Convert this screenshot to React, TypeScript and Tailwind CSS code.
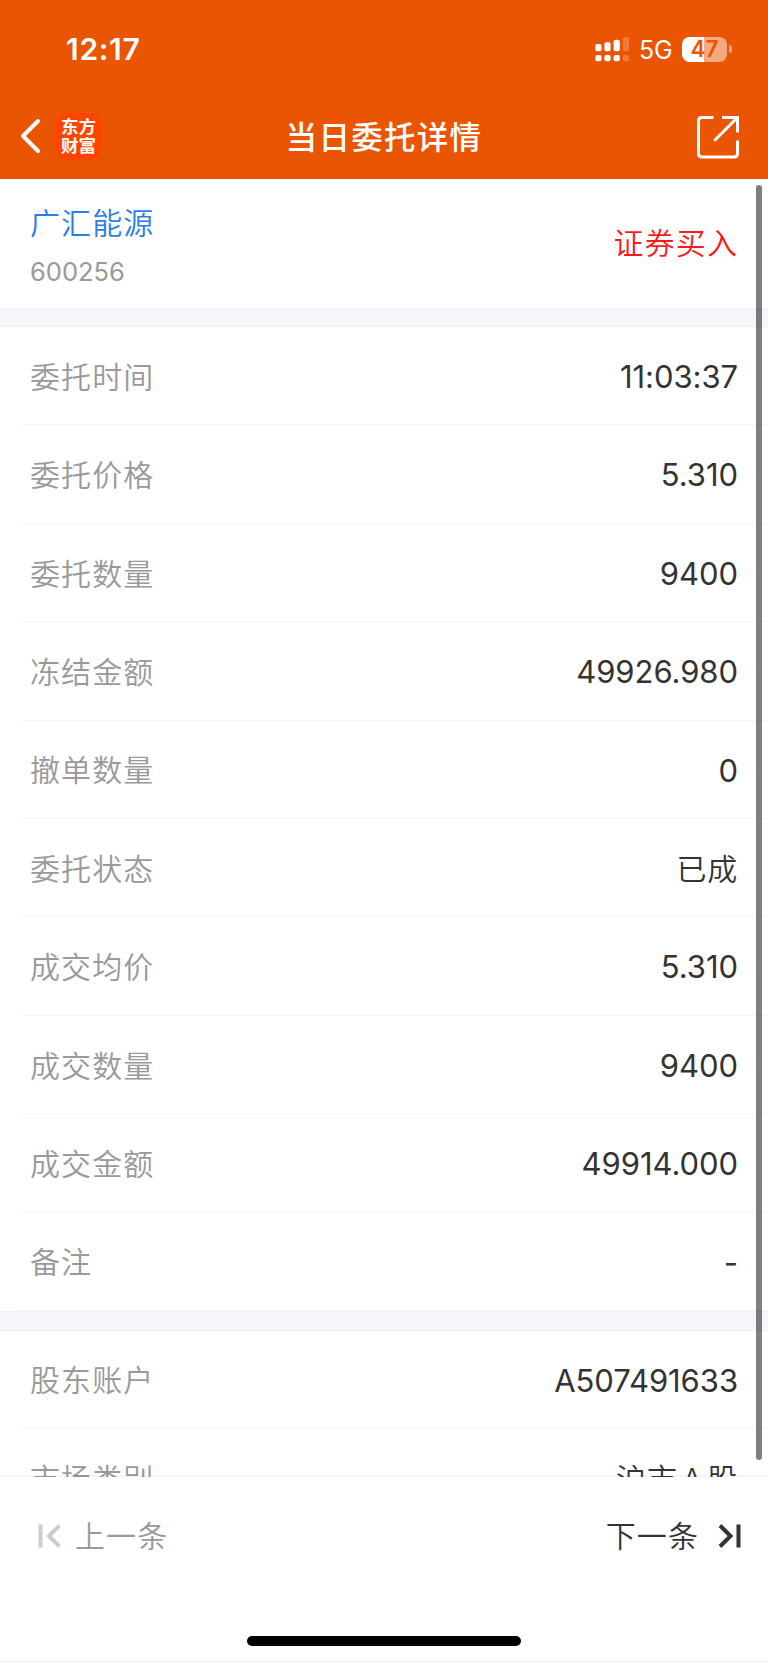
import clsx from 'clsx'

type Item = {
  label: string
  value: string
}

const orderItems: Item[] = [
  { label: '委托时间', value: '11:03:37' },
  { label: '委托价格', value: '5.310' },
  { label: '委托数量', value: '9400' },
  { label: '冻结金额', value: '49926.980' },
  { label: '撤单数量', value: '0' },
  { label: '委托状态', value: '已成' },
  { label: '成交均价', value: '5.310' },
  { label: '成交数量', value: '9400' },
  { label: '成交金额', value: '49914.000' },
  { label: '备注', value: '-' },
]

const accountItems: Item[] = [
  { label: '股东账户', value: 'A507491633' },
  { label: '市场类别', value: '沪市 A 股' },
]

function SignalIcon() {
  return (
    <svg width="36" height="26" viewBox="0 0 36 26" fill="#fff">
      <rect x="0.3" y="8" width="6.2" height="7.2" rx="2" />
      <rect x="9.4" y="6.2" width="6.2" height="9" rx="2" />
      <rect x="18.6" y="3.7" width="6.2" height="11.5" rx="2" />
      <rect x="0.3" y="19" width="6.2" height="6.2" rx="2" />
      <rect x="9.4" y="19" width="6.2" height="6.2" rx="2" />
      <rect x="18.6" y="19" width="6.2" height="6.2" rx="2" />
      <g opacity="0.22">
        <rect x="27.8" y="1" width="6.2" height="14.2" rx="2" />
        <rect x="27.8" y="19" width="6.2" height="6.2" rx="2" />
      </g>
    </svg>
  )
}

function Battery() {
  return (
    <div className="flex items-center gap-[2px]">
      <div className="flex h-[25px] w-[45px] items-center justify-center rounded-[7.5px] bg-[linear-gradient(90deg,#fff_48%,#f4aa80_48%)]">
        <span className="text-[22.5px] leading-none font-semibold text-[#ea5504]">47</span>
      </div>
      <div className="h-[8px] w-[3px] rounded-r-full bg-[#f4aa80]" />
    </div>
  )
}

function Header() {
  return (
    <header className="h-[179px] shrink-0 bg-[#ea5504] text-white">
      <div className="flex h-[98px] items-center justify-between pr-[36px] pl-[66px]">
        <span className="text-[30px] font-semibold tracking-[0.7px]">12:17</span>
        <div className="flex items-center">
          <SignalIcon />
          <span className="mt-[2px] ml-[8px] w-[33px] text-[25px] leading-none tracking-[-0.2px]">5G</span>
          <div className="ml-[10px]">
            <Battery />
          </div>
        </div>
      </div>
      <div className="grid h-[76px] grid-cols-[1fr_auto_1fr] items-center pr-[29px] pl-[19px]">
        <div className="flex items-center">
          <svg width="24" height="36" viewBox="0 0 24 36" fill="none" stroke="#fff" strokeWidth="4" strokeLinecap="round" strokeLinejoin="round">
            <path d="M19 3L4 18L19 33" />
          </svg>
          <div className="ml-[12px] flex size-[47px] flex-col items-center justify-center rounded-[11px] bg-[#ff4400] text-[17.5px] leading-[19.5px] font-bold">
            <span>东方</span>
            <span>财富</span>
          </div>
        </div>
        <h1 className="mt-[3px] ml-[10px] text-[31.5px] leading-none font-medium tracking-[1.3px]">当日委托详情</h1>
        <svg className="mt-[1px] justify-self-end" width="44" height="44" viewBox="0 0 44 44" fill="none" stroke="#fff" strokeWidth="3">
          <path d="M18.5 2.5H7Q3.5 2.5 3.5 6V38.5Q3.5 42 7 42H39Q42.5 42 42.5 38.5V25.5" />
          <path d="M27 2.5H42.5V17.5" />
          <path d="M20 25L41.5 3.5" strokeLinecap="round" />
        </svg>
      </div>
    </header>
  )
}

function Divider() {
  return <div className="h-[19.6px] shrink-0 border-y border-[#f0f1f3] bg-[#f6f7fa]" />
}

function ItemList({ items }: { items: Item[] }) {
  return (
    <dl className="shrink-0 pl-5">
      {items.map(({ label, value }) => (
        <div
          key={label}
          className="flex h-[98.4px] items-center justify-between border-b border-[#f5f5f5] pt-[3px] pr-[30px] pl-[10px]"
        >
          <dt className="text-[30px] font-[350] tracking-[1.1px] text-[#999]">{label}</dt>
          <dd
            className={clsx(
              'text-[#333]',
              /[^\x00-\x7f]/.test(value)
                ? 'text-[30px] font-[350] tracking-[0.8px] [word-spacing:-5px]'
                : 'text-[31px] tracking-[-0.05px]',
            )}
          >
            {value}
          </dd>
        </div>
      ))}
    </dl>
  )
}

function Footer() {
  return (
    <footer className="flex h-[186px] shrink-0 flex-col bg-white">
      <div className="flex h-[118px] items-center justify-between pr-[26px] pl-[36px] text-[30px]">
        <button className="flex items-center gap-[12px] font-[350] text-[#999]">
          <svg width="27" height="28" viewBox="0 0 27 28" fill="none" stroke="#ccc" strokeWidth="4">
            <path d="M4.5 2.5V25.5M23.5 3.5L13 14L23.5 24.5" />
          </svg>
          <span className="tracking-[1.1px]">上一条</span>
        </button>
        <button className="flex items-center gap-[18px] font-[350] text-[#333]">
          <span className="tracking-[1.1px]">下一条</span>
          <svg width="25" height="28" viewBox="0 0 25 28" fill="none" stroke="#333" strokeWidth="4">
            <path d="M3 3.5L13.5 14L3 24.5M21.5 2.5V25.5" />
          </svg>
        </button>
      </div>
      <div className="mx-auto mt-auto mb-[14px] h-[10px] w-[274px] rounded-full bg-black" />
      <div className="h-[3px] bg-[#f7f7f7]" />
    </footer>
  )
}

export default function App() {
  return (
    <div className="flex h-[1663px] w-[768px] flex-col overflow-hidden bg-white font-['Inter','Noto_Sans_CJK_SC',sans-serif]">
      <Header />
      <main className="relative flex min-h-0 flex-1 flex-col overflow-hidden">
        <section className="flex h-[128.5px] shrink-0 items-center justify-between px-[30px]">
          <div className="flex flex-col gap-[11px] pt-[8px]">
            <h2 className="text-[30px] leading-[38px] font-[350] tracking-[1.1px] text-[#2b7de9]">广汇能源</h2>
            <p className="text-[25.5px] leading-[38px] text-[#999]">600256</p>
          </div>
          <span className="text-[30px] font-[350] tracking-[1.1px] text-[#fb1a1a]">证券买入</span>
        </section>
        <Divider />
        <ItemList items={orderItems} />
        <Divider />
        <ItemList items={accountItems} />
        <div className="absolute top-[6px] right-[6px] h-[1275px] w-[6px] rounded-full bg-black/50" />
        <div className="absolute inset-x-0 bottom-0 h-[2px] bg-black/4" />
      </main>
      <Footer />
    </div>
  )
}
